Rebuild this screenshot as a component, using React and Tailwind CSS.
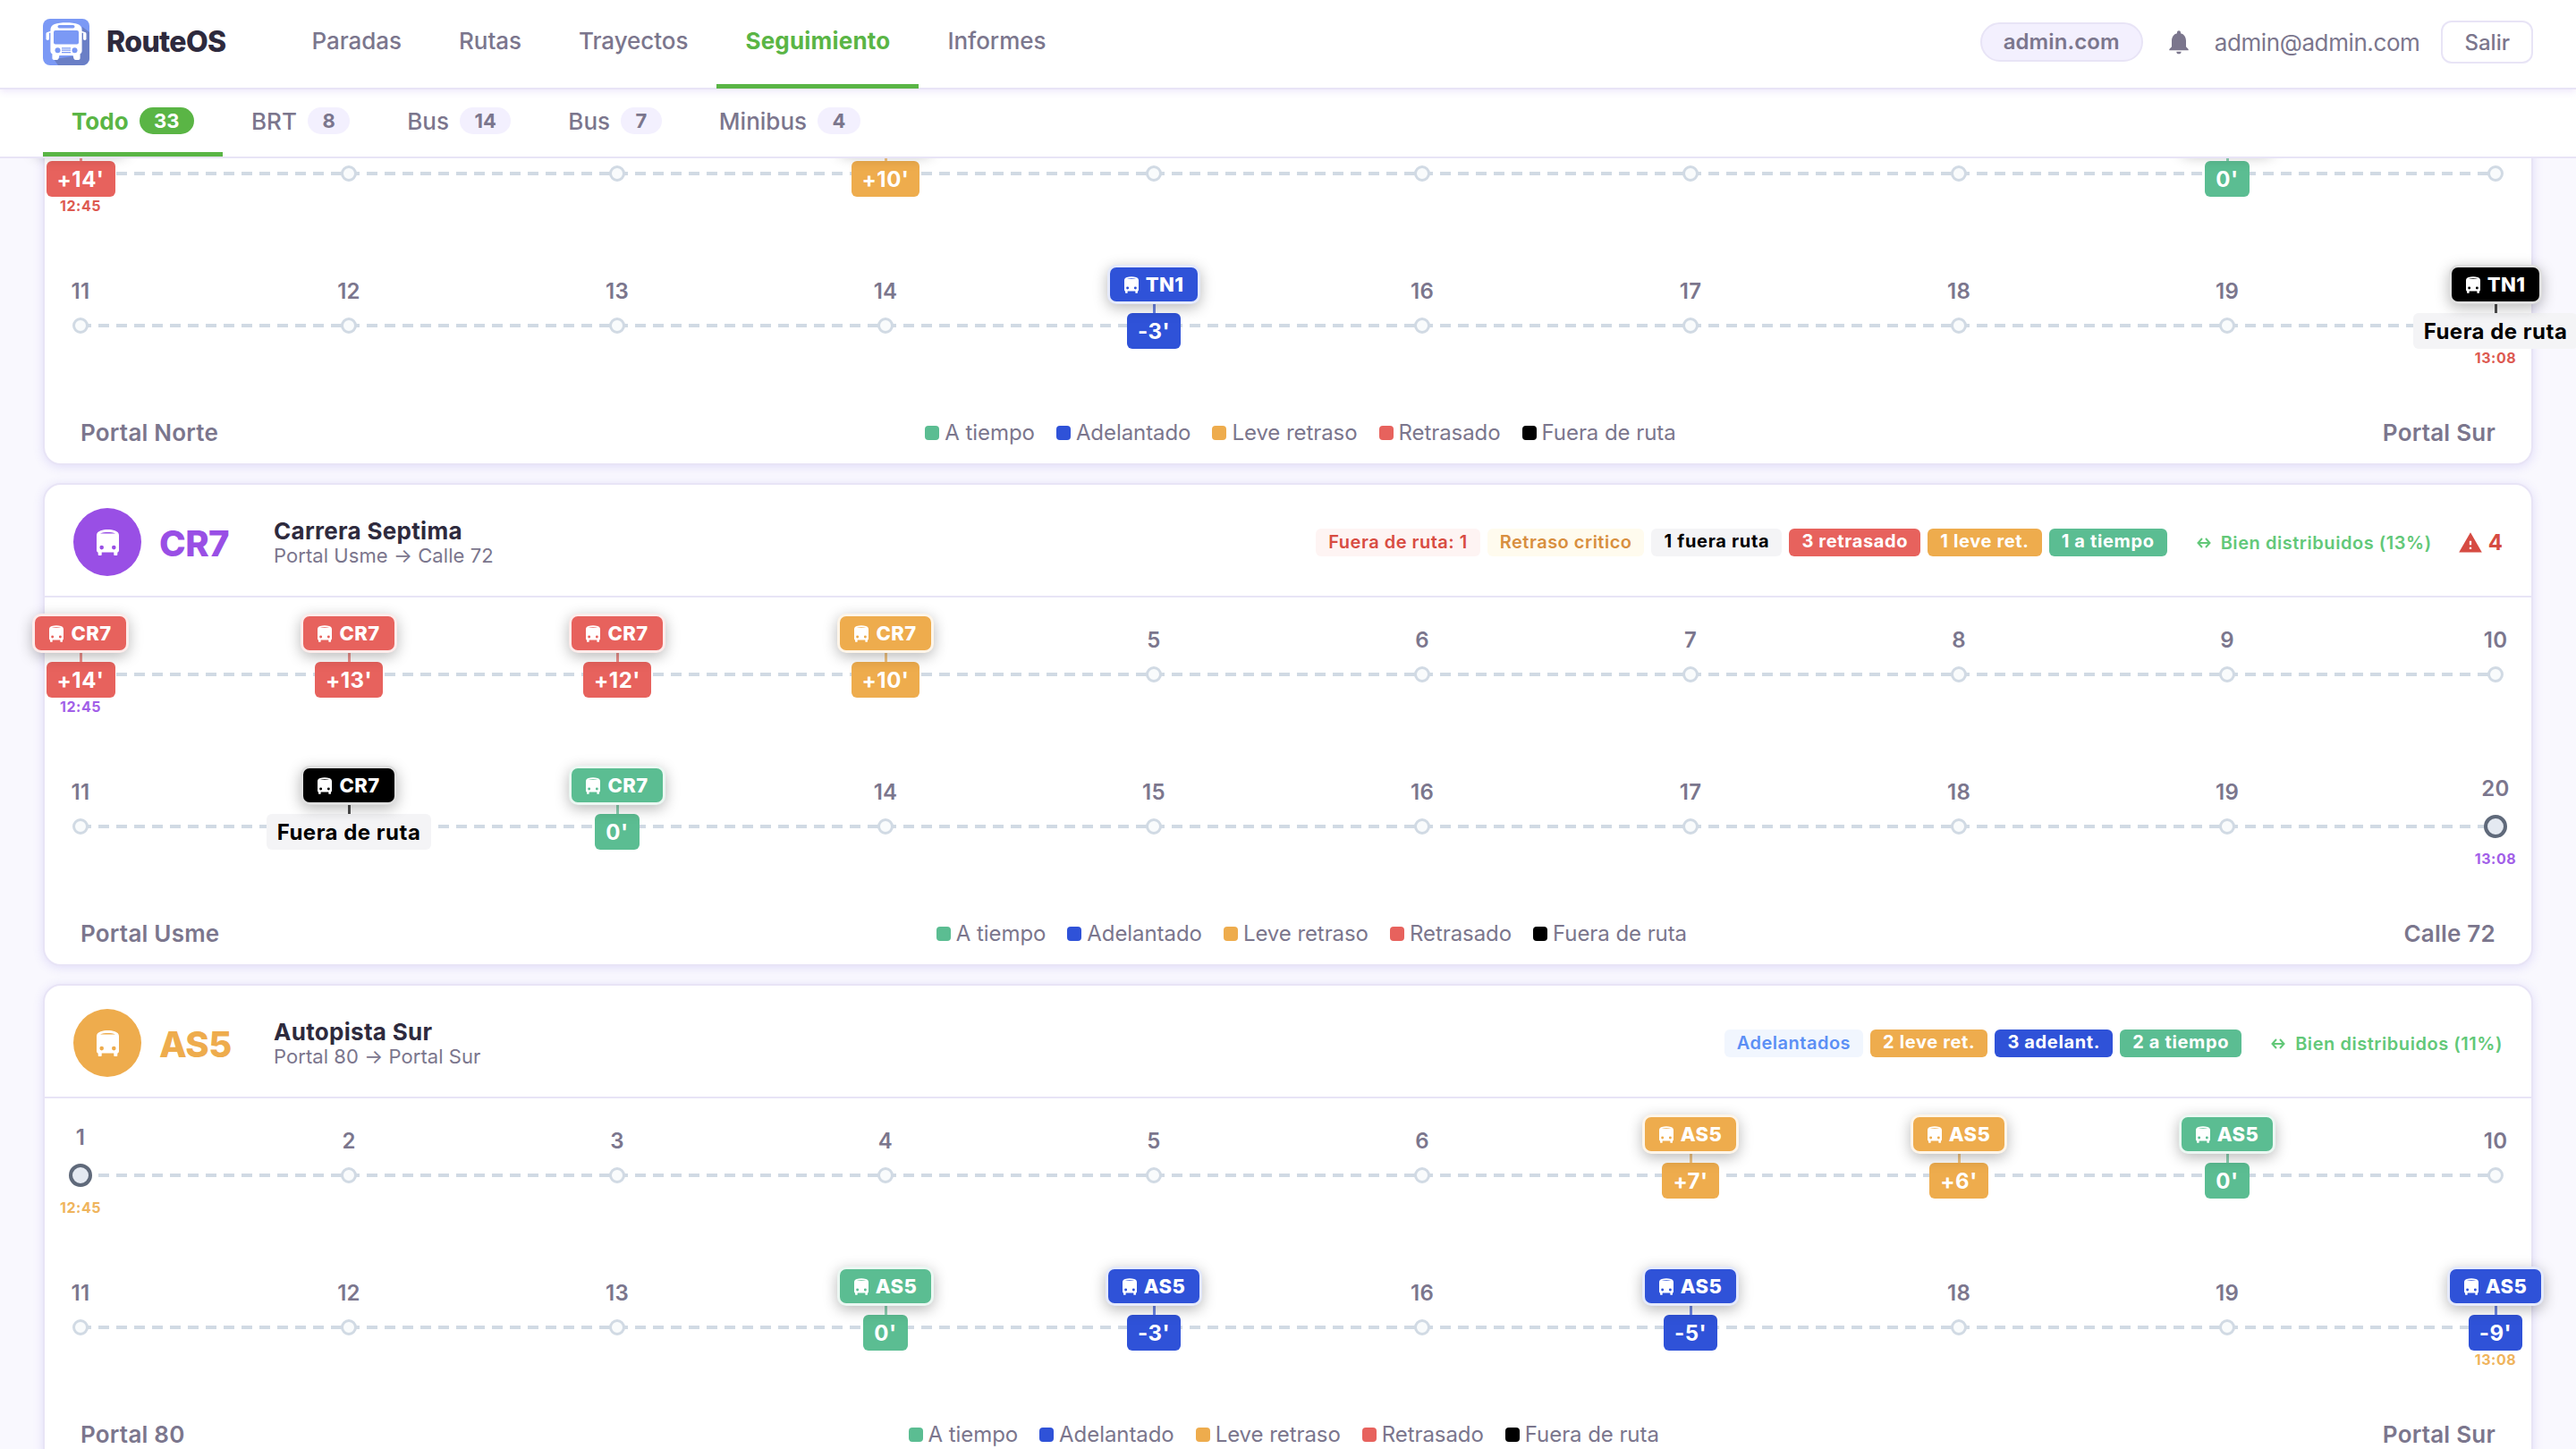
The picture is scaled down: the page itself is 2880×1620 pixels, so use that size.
// src/App.jsx
import React, { useState } from 'react';
import { MdNotifications, MdWarning } from 'react-icons/md';

const navLinks = ['Paradas', 'Rutas', 'Trayectos', 'Seguimiento', 'Informes'];

const tabs = [
  { id: 'todo', label: 'Todo', count: 33 },
  { id: 'brt', label: 'BRT', count: 8 },
  { id: 'bus-a', label: 'Bus', count: 14 },
  { id: 'bus-b', label: 'Bus', count: 7 },
  { id: 'minibus', label: 'Minibus', count: 4 },
];

// Colours for each vehicle status
const statusStyles = {
  onTime: { badge: 'bg-[#5bbd92] text-white', value: 'bg-[#5bbd92] text-white', line: 'bg-[#5bbd92]' },
  early: { badge: 'bg-[#2f52d8] text-white', value: 'bg-[#2f52d8] text-white', line: 'bg-[#2f52d8]' },
  slight: { badge: 'bg-[#eeac4d] text-white', value: 'bg-[#eeac4d] text-white', line: 'bg-[#eeac4d]' },
  late: { badge: 'bg-[#e7625d] text-white', value: 'bg-[#e7625d] text-white', line: 'bg-[#e7625d]' },
  off: { badge: 'bg-black text-white', value: 'bg-[#f4f4f6] text-black', line: 'bg-black' },
};

const chipStyles = {
  danger: 'bg-[#fef4f3] text-[#d84c42] font-semibold leading-[31px] tracking-[0.5px]',
  warning: 'bg-[#fffbee] text-[#d88f3f] font-semibold leading-[31px] tracking-[0.5px]',
  info: 'bg-[#f1f6fe] text-[#5b8ff5] font-semibold leading-[31px] tracking-[0.5px]',
  off: 'bg-[#f4f4f6] text-black font-bold leading-[28px] tracking-[0.7px]',
  late: 'bg-[#e7625d] text-white font-bold leading-[28px] tracking-[0.65px]',
  slight: 'bg-[#eeac4d] text-white font-bold leading-[28px] tracking-[0.65px]',
  early: 'bg-[#2f52d8] text-white font-bold leading-[28px] tracking-[0.65px]',
  onTime: 'bg-[#5bbd92] text-white font-bold leading-[28px] tracking-[0.65px]',
};

const legend = [
  { label: 'A tiempo', color: 'bg-[#5bbd92]' },
  { label: 'Adelantado', color: 'bg-[#2f52d8]' },
  { label: 'Leve retraso', color: 'bg-[#eeac4d]' },
  { label: 'Retrasado', color: 'bg-[#e7625d]' },
  { label: 'Fuera de ruta', color: 'bg-black' },
];

const routes = [
  {
    code: 'TN1',
    timeColor: 'text-[#dd5a50]',
    from: 'Portal Norte',
    to: 'Portal Sur',
    vehicles: {
      1: { status: 'late', value: "+14'" },
      4: { status: 'slight', value: "+10'" },
      9: { status: 'onTime', value: "0'" },
      15: { status: 'early', value: "-3'" },
      20: { status: 'off', value: 'Fuera de ruta' },
    },
  },
  {
    code: 'CR7',
    name: 'Carrera Septima',
    from: 'Portal Usme',
    to: 'Calle 72',
    circle: 'bg-[#994fe5]',
    codeColor: 'text-[#994fe5]',
    timeColor: 'text-[#a25fe8]',
    chips: [
      { type: 'danger', label: 'Fuera de ruta: 1' },
      { type: 'warning', label: 'Retraso critico' },
      { type: 'off', label: '1 fuera ruta' },
      { type: 'late', label: '3 retrasado' },
      { type: 'slight', label: '1 leve ret.' },
      { type: 'onTime', label: '1 a tiempo' },
    ],
    spread: 'Bien distribuidos (13%)',
    alerts: 4,
    vehicles: {
      1: { status: 'late', value: "+14'" },
      2: { status: 'late', value: "+13'" },
      3: { status: 'late', value: "+12'" },
      4: { status: 'slight', value: "+10'" },
      12: { status: 'off', value: 'Fuera de ruta' },
      13: { status: 'onTime', value: "0'" },
    },
  },
  {
    code: 'AS5',
    name: 'Autopista Sur',
    from: 'Portal 80',
    to: 'Portal Sur',
    circle: 'bg-[#eeac4d]',
    codeColor: 'text-[#eeac4d]',
    timeColor: 'text-[#efb45c]',
    chips: [
      { type: 'info', label: 'Adelantados' },
      { type: 'slight', label: '2 leve ret.' },
      { type: 'early', label: '3 adelant.' },
      { type: 'onTime', label: '2 a tiempo' },
    ],
    spread: 'Bien distribuidos (11%)',
    vehicles: {
      7: { status: 'slight', value: "+7'" },
      8: { status: 'slight', value: "+6'" },
      9: { status: 'onTime', value: "0'" },
      14: { status: 'onTime', value: "0'" },
      15: { status: 'early', value: "-3'" },
      17: { status: 'early', value: "-5'" },
      20: { status: 'early', value: "-9'" },
    },
  },
];

const BusIcon = ({ className }) => (
  <svg className={className} viewBox="0 0 25 29" fill="currentColor">
    <path
      fillRule="evenodd"
      d="M4.5 1.2C7 .3 9.6 0 12.5 0s5.5.3 8 1.2C23.4 2.200 25 4 25 6.500V23c0 1.300-.6 2.200-1.700 2.700V28c0 .6-.4 1-1 1h-2c-.6 0-1-.4-1-1v-2.600H5.700V28c0 .6-.4 1-1 1h-2c-.6 0-1-.4-1-1v-2.300C.6 25.200 0 24.300 0 23V6.500C0 4 1.600 2.200 4.500 1.200ZM4 4.400C6.500 3.500 9.300 3 12.500 3s6 .5 8.500 1.400H4ZM5.700 17.800a2.300 2.300 0 1 0 0 4.600 2.300 2.300 0 0 0 0-4.600Zm13.600 0a2.300 2.300 0 1 0 0 4.600 2.300 2.300 0 0 0 0-4.600Z"
    />
  </svg>
);

const SpreadIcon = () => (
  <svg className="h-3 w-4" viewBox="0 0 16 12" fill="none" stroke="currentColor" strokeWidth="2">
    <path d="M2 6h12M6 1 1.500 6 6 11M10 1l4.500 5L10 11" />
  </svg>
);

const Logo = () => (
  <svg className="h-[52px] w-[52px] rounded-lg" viewBox="0 0 52 52">
    <rect width="52" height="52" fill="#7b99f5" />
    <path d="M44 9l8 6v37H17l-5-7 28-4z" fill="#6a7fc6" />
    <path
      d="M13 6c3-1.200 8-1.700 13-1.700S36 4.800 39 6c3 1.100 4.600 3.500 4.600 7v23c0 1.500-.8 2.600-2 3.200V44c0 1.200-.8 2-2 2h-3c-1.200 0-2-.8-2.300-2l-.7-3H18.400l-.7 3c-.3 1.200-1.100 2-2.300 2h-3c-1.200 0-2-.8-2-2v-4.800c-1.200-.6-2-1.700-2-3.200V13c0-3.500 1.600-5.900 4.600-7z"
      fill="#fff"
    />
    <rect x="3.500" y="15" width="3.500" height="9" rx="1.700" fill="#fff" />
    <rect x="45" y="15" width="3.500" height="9" rx="1.700" fill="#fff" />
    <path d="M5 17c0-1.500 1.500-2.300 4-2.300M47 17c0-1.500-1.500-2.300-4-2.300" stroke="#fff" strokeWidth="1.500" fill="none" />
    <rect x="16.500" y="7" width="19" height="3.600" rx="1.800" fill="#7b99f5" />
    <rect x="12" y="13" width="28" height="15.500" rx="2" fill="#7b99f5" />
    <circle cx="16.500" cy="35.300" r="3" fill="#7b99f5" />
    <circle cx="35.500" cy="35.300" r="3" fill="#7b99f5" />
    <path d="M21 32.800h10M21 35.200h10M21 37.600h10" stroke="#7b99f5" strokeWidth="1.200" />
  </svg>
);

const Header = () => (
  <header className="relative z-30 flex h-[100px] shrink-0 items-stretch border-b-2 border-[#e8e4f6] bg-white px-12 shadow-[0_2px_8px_rgba(124,77,220,0.14)]">
    <div className="flex items-center gap-[19px] pb-1">
      <Logo />
      <span className="text-[32px] font-extrabold tracking-[-0.64px] text-[#2e2a3d]">RouteOS</span>
    </div>
    <nav className="-mb-px ml-16 flex">
      {navLinks.map((link) => (
        <a
          key={link}
          className={`flex items-center border-b-[5px] px-8 pb-[3px] text-[26px] ${
            link === 'Seguimiento'
              ? 'border-[#5ab545] font-bold tracking-[0.2px] text-[#5ab545]'
              : 'border-transparent font-medium tracking-[-0.05px] text-[#7b768d]'
          }`}
        >
          {link}
        </a>
      ))}
    </nav>
    <div className="ml-auto flex items-center pb-1 text-[#7b768d]">
      <span className="flex h-11 items-center rounded-full border-2 border-[#e8e4f6] bg-[#f3f0fe] px-6 text-2xl font-semibold tracking-[0.1px]">
        admin.com
      </span>
      <MdNotifications className="ml-6 size-8" />
      <span className="ml-6 text-[26px] tracking-[-0.4px]">admin@admin.com</span>
      <button className="ml-6 h-12 rounded-xl border-2 border-[#e8e4f6] px-6 pt-px text-2xl font-medium">Salir</button>
    </div>
  </header>
);

const Tabs = ({ active, onChange }) => (
  <div className="relative z-20 flex h-[77px] shrink-0 border-b-2 border-[#e8e4f6] bg-white px-12">
    {tabs.map((tab) => {
      const isActive = tab.id === active;
      return (
        <button
          key={tab.id}
          onClick={() => onChange(tab.id)}
          className={`flex items-center gap-3 border-b-[5px] px-8 text-[26px] ${
            isActive ? 'border-[#5ab545] font-bold text-[#5ab545]' : 'border-transparent font-medium text-[#7b768d]'
          }`}
        >
          {tab.label}
          <span
            className={`flex h-[30px] items-center rounded-full px-[16.5px] text-[22px] font-bold ${
              isActive ? 'bg-[#5ab545] text-white' : 'bg-[#f3f0fe]'
            }`}
          >
            {tab.count}
          </span>
        </button>
      );
    })}
  </div>
);

const Stop = ({ number, code, vehicle, time, timeColor }) => {
  if (vehicle) {
    const style = statusStyles[vehicle.status];
    return (
      <div className="flex w-0 flex-col items-center pt-[18px] whitespace-nowrap">
        <div
          className={`relative z-10 flex h-11 shrink-0 items-center gap-2 rounded-[10px] border-3 border-white/88 px-4 text-[22px] font-extrabold tracking-[0.4px] shadow-[0_4px_16px_rgba(0,0,0,0.28)] ${style.badge}`}
        >
          <BusIcon className="h-[19px] w-4" />
          {code}
        </div>
        <div className={`h-2.5 w-[3px] shrink-0 opacity-70 ${style.line}`}></div>
        <div
          className={`relative flex h-10 shrink-0 items-center rounded-md px-3 pt-px text-2xl font-bold tracking-[0.5px] ${style.value}`}
        >
          {vehicle.value}
        </div>
        {time && <span className={`mt-0.5 text-base leading-4 font-bold tracking-[0.5px] ${timeColor}`}>{time}</span>}
      </div>
    );
  }

  return (
    <div className={`flex w-0 flex-col items-center ${time ? 'pt-8' : 'pt-9'}`}>
      <span className="mb-[17px] text-2xl leading-6 font-semibold tracking-[0.3px] text-[#7b768d]">{number}</span>
      {time ? (
        <span className="relative size-[26px] shrink-0 rounded-full border-4 border-[#5f697a] bg-[#e4e9f1]"></span>
      ) : (
        <span className="relative size-[18px] shrink-0 rounded-full border-3 border-[#d1dae4] bg-[#f9fbfc]"></span>
      )}
      {time && <span className={`mt-[15px] text-base leading-4 font-bold tracking-[0.5px] ${timeColor}`}>{time}</span>}
    </div>
  );
};

const StopRow = ({ route, start }) => {
  const numbers = Array.from({ length: 10 }, (_, i) => start + i);
  const times = { 1: '12:45', 20: '13:08' };

  return (
    <div className="relative flex h-[170px] justify-between px-10">
      {/* Dashed track behind the stops */}
      <div className="absolute inset-x-10 top-[84px] h-1 bg-[repeating-linear-gradient(90deg,#d1dae4_0_12px,transparent_12px_20px)]"></div>
      {numbers.map((n) => (
        <Stop
          key={n}
          number={n}
          code={route.code}
          vehicle={route.vehicles[n]}
          time={times[n]}
          timeColor={route.timeColor}
        />
      ))}
    </div>
  );
};

const RouteHeader = ({ route }) => (
  <div className="flex h-[126px] items-center border-b-2 border-[#e8e4f6] px-8">
    <div className={`mt-1 flex size-[76px] items-center justify-center rounded-full text-white ${route.circle}`}>
      <BusIcon className="h-[29px] w-[25px]" />
    </div>
    <div className={`ml-5 w-32 pt-2 text-[40px] font-extrabold tracking-[-0.6px] ${route.codeColor}`}>
      {route.code}
    </div>
    <div className="pt-1.5">
      <h2 className="text-[26px] leading-7 font-bold tracking-[0.3px] text-[#2e2a3d]">{route.name}</h2>
      <p className="text-[22px] leading-[26px] tracking-[0.06px] text-[#7b768d]">
        {route.from} → {route.to}
      </p>
    </div>
    <div className="ml-auto flex items-center gap-2 pt-[5px] text-xl">
      {route.chips.map((chip) => (
        <span key={chip.label} className={`h-[31px] rounded-md px-3.5 ${chipStyles[chip.type]}`}>
          {chip.label}
        </span>
      ))}
    </div>
    <div className="ml-[33px] flex items-center gap-[11px] pt-[5px] text-xl font-semibold tracking-[0.55px] text-[#62c878]">
      <SpreadIcon />
      {route.spread}
    </div>
    {route.alerts && (
      <div className="ml-[29px] flex items-center gap-1.5 pt-[5px] text-2xl font-bold text-[#d64b42]">
        <MdWarning className="size-7" />
        {route.alerts}
      </div>
    )}
  </div>
);

const RouteCard = ({ route }) => (
  <section className="h-[540px] shrink-0 rounded-[20px] border-2 border-[#e8e4f6] bg-white shadow-[0_2px_12px_rgba(100,80,220,0.16)]">
    {route.name ? <RouteHeader route={route} /> : <div className="h-[126px] border-b-2 border-[#e8e4f6]"></div>}
    <StopRow route={route} start={1} />
    <StopRow route={route} start={11} />
    <div className="flex h-[70px] items-center justify-between px-10 pt-0.5 text-[#7b768d]">
      <span className="pb-0.5 text-[26px] font-semibold tracking-[0.22px]">{route.from}</span>
      <div className="flex gap-6 text-2xl tracking-[-0.07px]">
        {legend.map((item) => (
          <span key={item.label} className="flex items-center gap-1.5">
            <span className={`size-4 rounded-[4px] ${item.color}`}></span>
            {item.label}
          </span>
        ))}
      </div>
      <span className="pb-0.5 text-[26px] font-semibold tracking-[0.22px]">{route.to}</span>
    </div>
  </section>
);

const App = () => {
  const [activeTab, setActiveTab] = useState('todo');

  return (
    <div className="flex h-[1620px] flex-col overflow-hidden bg-[#f9f8fe] font-['Inter',sans-serif]">
      <Header />
      <Tabs active={activeTab} onChange={setActiveTab} />
      <main className="-mt-[197px] flex flex-col gap-5 px-12">
        {routes.map((route) => (
          <RouteCard key={route.code} route={route} />
        ))}
      </main>
    </div>
  );
};

export default App;
